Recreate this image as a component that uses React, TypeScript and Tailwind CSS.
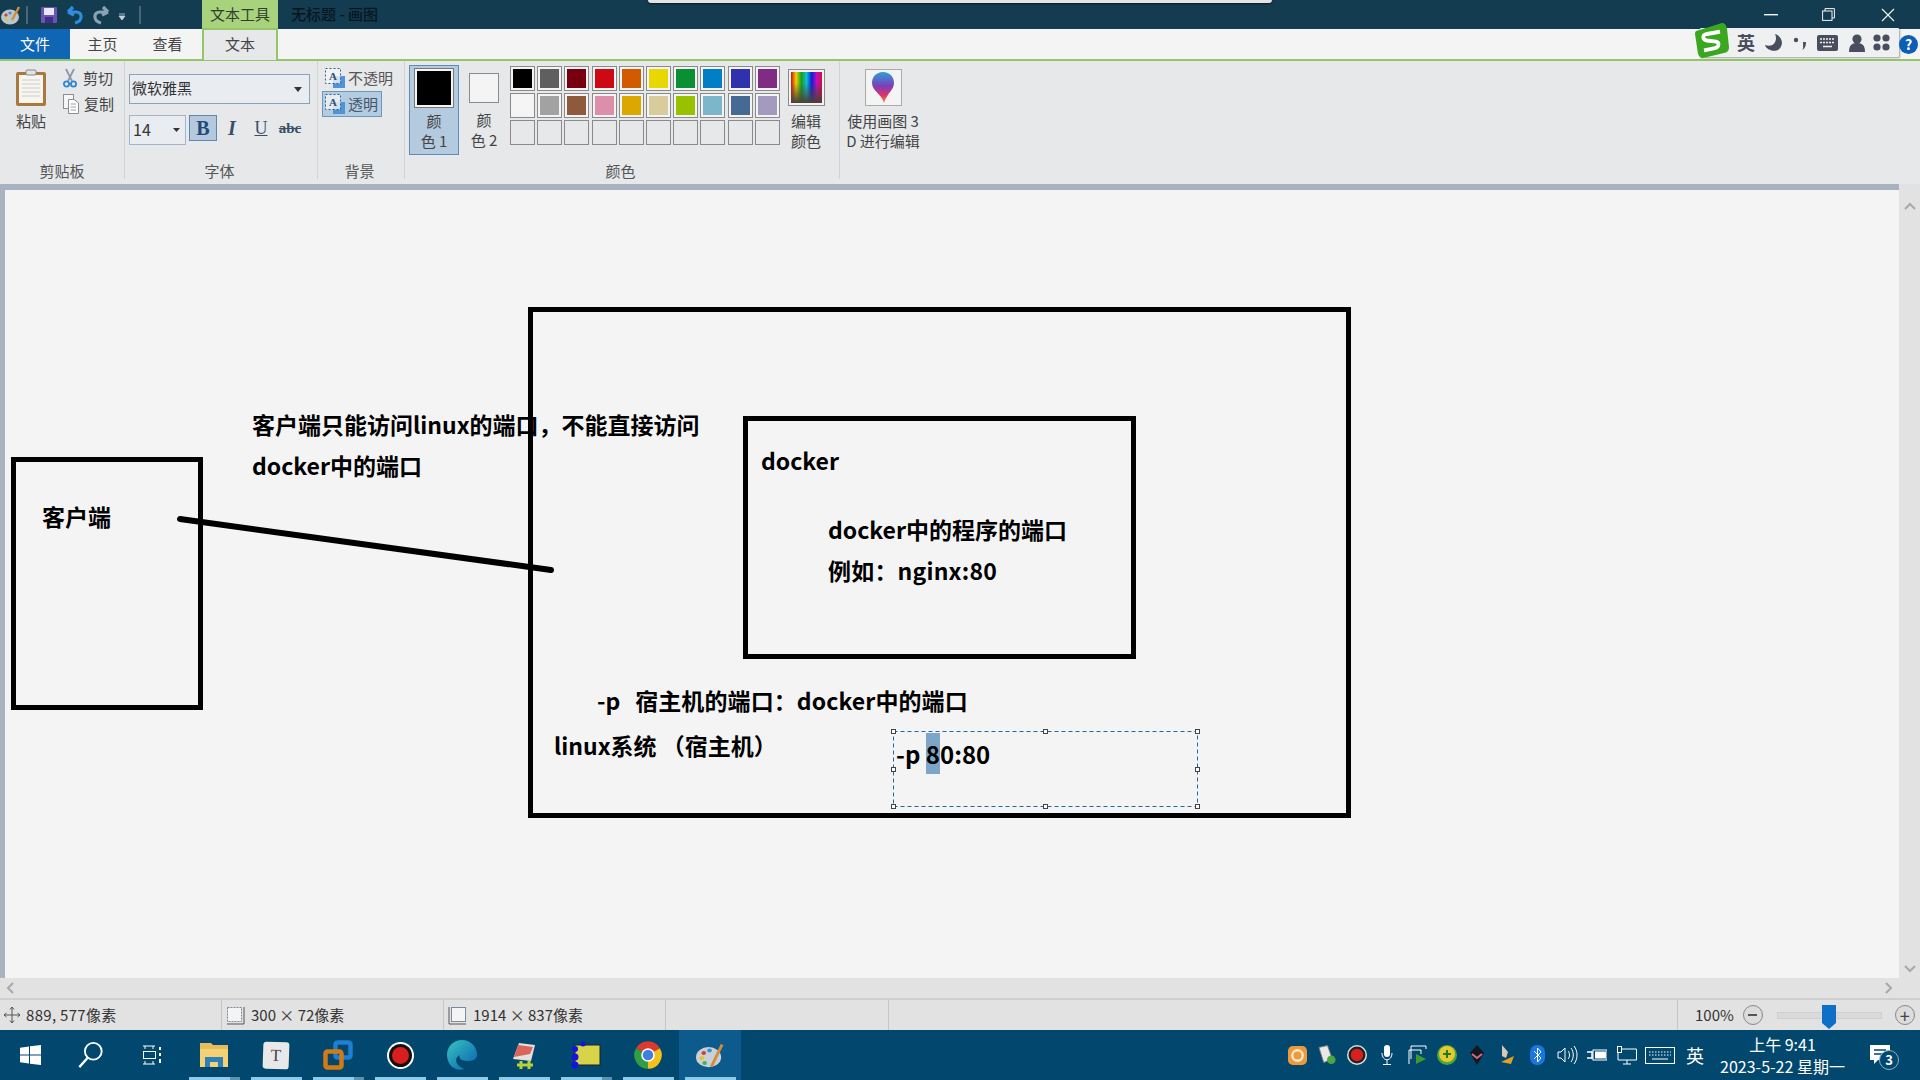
import type { ReactNode } from "react";

const paletteTop = [
  "bg-[#000000]", "bg-[#5f5f5f]", "bg-[#78000e]", "bg-[#cd0a14]", "bg-[#d25a00]",
  "bg-[#e6d800]", "bg-[#0a8f32]", "bg-[#007fc6]", "bg-[#2f32ac]", "bg-[#812c84]",
];
const paletteMid = [
  "bg-[#f5f5f5]", "bg-[#a2a2a2]", "bg-[#8f5a3c]", "bg-[#dd8eaa]", "bg-[#dca800]",
  "bg-[#d8cc9c]", "bg-[#98c200]", "bg-[#7cb6ca]", "bg-[#466a94]", "bg-[#a49ac0]",
];

function Swatch({ color }: { color: string }) {
  return (
    <div className="h-[25px] w-[25px] border border-[#8a8a8a] bg-[#f4f4f4] p-[2px]">
      <div className={`h-full w-full ${color}`} />
    </div>
  );
}

function GroupLabel({ children, shift = false }: { children: ReactNode; shift?: boolean }) {
  return <div className={`absolute -bottom-[4px] left-0 h-[24px] text-center text-[15px] leading-[24px] text-[#555] ${shift ? "right-[3px]" : "right-0"}`}>{children}</div>;
}

function TransparentIcon() {
  return (
    <svg width="20" height="20" viewBox="0 0 20 20" className="shrink-0">
      <rect x="8" y="8" width="12" height="12" fill="#4f94d8" />
      <rect x="0.5" y="0.5" width="15" height="15" fill="#f4f4f4" fillOpacity="0.8" stroke="#2f5f8f" strokeDasharray="2 2" />
      <text x="8" y="12" textAnchor="middle" fontSize="11" fontWeight="700" fontFamily="Liberation Serif" fill="#2d4f75">A</text>
    </svg>
  );
}

function TaskButton({ children, underline = true, split = false, active = false }: { children: ReactNode; underline?: boolean; split?: boolean; active?: boolean }) {
  return (
    <div className={`relative flex h-[50px] w-[62px] items-center justify-center ${active ? "bg-[#0c5b8c]" : ""}`}>
      {children}
      {underline && (
        <div className="absolute bottom-0 left-[6px] right-[5px] flex h-[3px]">
          <div className="flex-1 bg-[#8ecbe6]" />
          {split && <div className="w-[10px] bg-[#5f93ad]" />}
        </div>
      )}
    </div>
  );
}

function TrayItem({ children, wide = false }: { children: ReactNode; wide?: boolean }) {
  return <div className={`flex h-[50px] items-center justify-center ${wide ? "w-[34px]" : "w-[30px]"}`}>{children}</div>;
}

export default function App() {
  return (
    <div className="relative flex h-[1080px] w-[1920px] flex-col overflow-hidden bg-[#e2e2e2] font-['Noto_Sans_CJK_SC','Liberation_Sans',sans-serif]">
      {/* title bar */}
      <div className="flex h-[29px] shrink-0 items-center bg-[#143c51]">
        <svg width="20" height="24" viewBox="0 0 20 24" className="ml-[1px]">
          <ellipse cx="9" cy="14" rx="9" ry="7.5" fill="#b9c6cc" />
          <circle cx="5" cy="12" r="1.6" fill="#d63b2f" />
          <circle cx="9" cy="10" r="1.6" fill="#3a8fd8" />
          <circle cx="5" cy="16" r="1.6" fill="#e2c23a" />
          <path d="M11 17 L18 4" stroke="#d88a3a" strokeWidth="2.4" />
        </svg>
        <div className="ml-[5px] h-[18px] w-[2px] bg-[#4c6573]" />
        <svg width="16" height="16" viewBox="0 0 16 16" className="ml-[13px]">
          <rect width="16" height="16" rx="1" fill="#6a55b5" />
          <rect x="3" y="1" width="10" height="7" fill="#e9e6f5" />
          <rect x="4" y="10" width="8" height="6" fill="#3f2f86" />
        </svg>
        <svg width="18" height="20" viewBox="0 0 18 20" className="ml-[9px]">
          <path d="M2 7 L7 2 M2 7 L8 10 M2 7 H10 C17 7 17 16 9 18" fill="none" stroke="#2d8fdc" strokeWidth="3.2" />
        </svg>
        <svg width="18" height="20" viewBox="0 0 18 20" className="ml-[8px]">
          <path d="M16 7 L11 2 M16 7 L10 10 M16 7 H8 C1 7 1 16 9 18" fill="none" stroke="#88a3b3" strokeWidth="3.2" />
        </svg>
        <svg width="8" height="8" viewBox="0 0 8 8" className="ml-[8px] mt-[4px]">
          <path d="M1 1 H7 M1 3 H7 L4 7 Z" fill="#c8d2d8" stroke="#c8d2d8" strokeWidth="0.8" />
        </svg>
        <div className="ml-[13px] h-[18px] w-[2px] bg-[#4c6573]" />
        <div className="ml-[61px] flex h-[29px] w-[76px] items-center justify-center bg-[#a8d27c] text-[15px] text-[#2f3f2f]">文本工具</div>
        <div className="ml-[13px] text-[15px] font-medium text-[#061620]">无标题 - 画图</div>
        <div className="ml-auto flex items-center">
          <svg width="14" height="2" viewBox="0 0 14 2" className="mr-[44px]"><rect width="14" height="1.4" fill="#f2f5f6" /></svg>
          <svg width="13" height="13" viewBox="0 0 13 13" className="mr-[46px]">
            <path d="M3 3 V0.6 H12.4 V10 H10" fill="none" stroke="#f2f5f6" />
            <rect x="0.6" y="3" width="9.4" height="9.4" fill="none" stroke="#f2f5f6" />
          </svg>
          <svg width="14" height="14" viewBox="0 0 14 14" className="mr-[25px]">
            <path d="M1 1 L13 13 M13 1 L1 13" stroke="#f2f5f6" strokeWidth="1.1" />
          </svg>
        </div>
      </div>

      {/* tab row */}
      <div className="relative flex h-[32px] shrink-0 items-center border-b-2 border-[#93c668] bg-[#f4f4f4] text-[15px] text-[#444]">
        <div className="flex h-full w-[70px] items-center justify-center bg-[#0e66b5] text-white">文件</div>
        <div className="flex h-full w-[65px] items-center justify-center">主页</div>
        <div className="flex h-full w-[65px] items-center justify-center">查看</div>
        <div className="ml-[2px] flex h-[32px] w-[76px] items-center justify-center border-x-2 border-t-2 border-[#93c668] border-b-[#e6e8ea] bg-[#e6e8ea] pb-[2px]">文本</div>
      </div>

      {/* ribbon */}
      <div className="flex h-[123px] shrink-0 bg-[#e6e8ea] text-[15px] text-[#444]">
        <div className="relative flex h-[118px] w-[125px] border-r border-[#cfd2d6] pt-[5px]">
          <div className="ml-[15px] mt-[3px] flex w-[32px] flex-col items-center">
            <svg width="32" height="38" viewBox="0 0 32 38">
              <rect x="1" y="3" width="30" height="34" rx="2" fill="#a9773f" />
              <rect x="4" y="6" width="24" height="28" fill="#f7f5ee" />
              <path d="M7 11 H25 M7 15 H25 M7 19 H25 M7 23 H25 M7 27 H25" stroke="#c8ccd2" />
              <rect x="11" y="1" width="10" height="5" rx="1" fill="#dfe3e6" stroke="#888" />
            </svg>
            <div className="mt-[3px] leading-[22px]">粘贴</div>
          </div>
          <div className="ml-[16px] flex flex-col gap-[4px] pt-[1px]">
            <div className="flex h-[22px] items-center gap-[6px]">
              <svg width="14" height="20" viewBox="0 0 14 20">
                <path d="M3 1 L9 13 M11 1 L5 13" stroke="#8d99a5" strokeWidth="1.8" />
                <circle cx="3.5" cy="16" r="2.6" fill="none" stroke="#2f86d0" strokeWidth="1.8" />
                <circle cx="10.5" cy="16" r="2.6" fill="none" stroke="#2f86d0" strokeWidth="1.8" />
              </svg>
              <span>剪切</span>
            </div>
            <div className="flex h-[22px] items-center gap-[5px]">
              <svg width="16" height="20" viewBox="0 0 16 20">
                <rect x="0.5" y="0.5" width="10" height="14" fill="#f6f6f6" stroke="#8b8f94" />
                <path d="M5.5 5.5 H11 L15.5 9 V19.5 H5.5 Z" fill="#fff" stroke="#8b8f94" />
                <path d="M7.5 10 H13 M7.5 13 H13 M7.5 16 H13" stroke="#9aa6b2" />
              </svg>
              <span>复制</span>
            </div>
          </div>
          <GroupLabel>剪贴板</GroupLabel>
        </div>

        <div className="relative h-[118px] w-[193px] border-r border-[#cfd2d6] pl-[4px] pt-[13px]">
          <div className="flex h-[30px] w-[181px] items-center justify-between border border-[#8fa0ba] bg-[#e9ecf1] pl-[2px] pr-[7px] text-[#333]">
            <span className="-translate-y-[1px]">微软雅黑</span>
            <svg width="8" height="5" viewBox="0 0 8 5"><path d="M0 0 H8 L4 5 Z" fill="#333" /></svg>
          </div>
          <div className="mt-[11px] flex items-start">
            <div className="flex h-[30px] w-[57px] items-center justify-between border border-[#a7b4c8] bg-[#e9ecf1] pl-[3px] pr-[5px] text-[16px] text-[#333]">
              <span className="-translate-y-[1px]">14</span>
              <svg width="7" height="4" viewBox="0 0 7 4"><path d="M0 0 H7 L3.5 4 Z" fill="#333" /></svg>
            </div>
            <div className="ml-[3px] flex h-[26px] w-[28px] items-center justify-center border border-[#5c87ae] bg-[#b4c9de] font-['Liberation_Serif',serif] text-[20px] font-bold text-[#234a78]">B</div>
            <div className="flex h-[26px] w-[30px] items-center justify-center font-['Liberation_Serif',serif] text-[20px] italic font-bold text-[#3a4d68]">I</div>
            <div className="flex h-[26px] w-[28px] items-center justify-center font-['Liberation_Serif',serif] text-[18px] text-[#3a4d68] underline">U</div>
            <div className="flex h-[26px] w-[30px] items-center justify-center font-['Liberation_Serif',serif] text-[15px] font-bold text-[#3a4d68] line-through">abc</div>
          </div>
          <GroupLabel shift>字体</GroupLabel>
        </div>

        <div className="relative h-[118px] w-[87px] border-r border-[#cfd2d6] pl-[4px] pt-[6px]">
          <div className="flex h-[22px] items-center gap-[3px] pl-[3px] text-[#555]">
            <TransparentIcon />
            <span>不透明</span>
          </div>
          <div className="mt-[2px] flex h-[26px] w-[60px] items-center gap-[3px] border border-[#6b96bf] bg-[#b4cce0] pl-[2px] text-[#44566a]">
            <TransparentIcon />
            <span>透明</span>
          </div>
          <GroupLabel shift>背景</GroupLabel>
        </div>

        <div className="relative flex h-[118px] w-[435px] border-r border-[#cfd2d6] pt-[4px]">
          <div className="ml-[4px] flex h-[90px] w-[50px] flex-col items-center border border-[#5e8cb8] bg-[#b3cadf] pt-[2px] leading-[20px]">
            <div className="h-[40px] w-[40px] border border-[#777] bg-[#f4f4f4] p-[2px]"><div className="h-full w-full bg-black" /></div>
            <div className="mt-[3px]">颜</div>
            <div>色 1</div>
          </div>
          <div className="ml-[6px] flex w-[38px] flex-col items-center pt-[8px] leading-[20px]">
            <div className="h-[30px] w-[30px] border border-[#8a8a8a] bg-[#f4f4f4]" />
            <div className="mt-[7px]">颜</div>
            <div>色 2</div>
          </div>
          <div className="ml-[7px] mt-[1px] grid h-[79px] w-[270px] grid-cols-[repeat(10,25px)] grid-rows-[repeat(3,25px)] gap-x-[2.2px] gap-y-[2px]">
            {paletteTop.map((c) => <Swatch key={c} color={c} />)}
            {paletteMid.map((c) => <Swatch key={c} color={c} />)}
            {paletteTop.map((c) => <div key={c} className="h-[25px] w-[25px] border border-[#8a8a8a]" />)}
          </div>
          <div className="ml-[7px] flex w-[38px] flex-col items-center pt-[4px] leading-[20px]">
            <div className="h-[37px] w-[37px] border border-[#8a8a8a] bg-[#f4f4f4] p-[2px]">
              <div className="h-full w-full bg-[linear-gradient(to_bottom,transparent_35%,#4a4038),linear-gradient(to_right,#d01010,#f0d000,#10a020,#10c0d0,#1020d0,#c010c0,#d01030)]" />
            </div>
            <div className="mt-[5px]">编辑</div>
            <div>颜色</div>
          </div>
          <GroupLabel shift>颜色</GroupLabel>
        </div>

        <div className="flex w-[86px] flex-col items-center pt-[8px] leading-[20px]">
          <div className="flex h-[37px] w-[37px] items-center justify-center border border-[#aaa] bg-[#f4f4f4]">
            <svg width="22" height="31" viewBox="0 0 22 31">
              <defs>
                <linearGradient id="drop" x1="0" y1="0" x2="0" y2="1">
                  <stop offset="0" stopColor="#2f9fd8" />
                  <stop offset="0.45" stopColor="#7a3fb8" />
                  <stop offset="0.75" stopColor="#e0306a" />
                  <stop offset="1" stopColor="#f09020" />
                </linearGradient>
              </defs>
              <path d="M11 0 C18 0 22 5 22 11 C22 18 15 21 12 31 C9 21 0 19 0 11 C0 5 4 0 11 0 Z" fill="url(#drop)" />
            </svg>
          </div>
          <div className="mt-[5px] whitespace-nowrap">使用画图 3</div>
          <div className="whitespace-nowrap">D 进行编辑</div>
        </div>
      </div>

      {/* canvas and scroll bars */}
      <div className="flex min-h-0 flex-1">
        <div className="flex min-w-0 flex-1 flex-col">
          <div className="h-[6px] shrink-0 bg-[#a8b2c0]" />
          <div className="flex min-h-0 flex-1">
            <div className="w-[5px] shrink-0 bg-[#a8b2c0]" />
            <div className="relative flex-1 bg-[#f4f4f4] font-bold text-black">
              <div className="absolute left-[523px] top-[117px] h-[511px] w-[823px] border-[5px] border-black" />
              <div className="absolute left-[738px] top-[226px] h-[243px] w-[393px] border-[5px] border-black" />
              <div className="absolute left-[6px] top-[267px] h-[253px] w-[192px] border-[5px] border-black" />
              <svg className="absolute inset-0 h-full w-full">
                <line x1="175" y1="329" x2="546" y2="380" stroke="black" strokeWidth="6" strokeLinecap="round" />
              </svg>
              <div className="absolute left-[37px] top-[310px] text-[23px] leading-[32px]">客户端</div>
              <div className="absolute left-[247px] top-[218px] whitespace-nowrap text-[23px] leading-[32px]">客户端只能访问linux的端口，不能直接访问</div>
              <div className="absolute left-[247px] top-[259px] whitespace-nowrap text-[23px] leading-[32px]">docker中的端口</div>
              <div className="absolute left-[756px] top-[254px] text-[23px] leading-[32px]">docker</div>
              <div className="absolute left-[823px] top-[323px] whitespace-nowrap text-[23px] leading-[32px]">docker中的程序的端口</div>
              <div className="absolute left-[823px] top-[364px] whitespace-nowrap text-[23px] leading-[32px] tracking-[0.2px]">例如：nginx:80</div>
              <div className="absolute left-[592px] top-[494px] whitespace-pre text-[23px] leading-[32px] tracking-[0.1px]">-p  <span className="pl-[4px]">宿主机的端口：docker中的端口</span></div>
              <div className="absolute left-[549px] top-[539px] whitespace-pre text-[23px] leading-[32px]">linux系统 （宿主机）</div>
              <div className="absolute left-[887px] top-[540px] h-[78px] w-[307px]">
                <svg className="absolute inset-0 h-full w-full">
                  <rect x="1.5" y="1.5" width="304" height="75" fill="none" stroke="#1f6a9c" strokeDasharray="4 3" />
                </svg>
                <div className="absolute left-[4px] top-[3px] flex h-[41px] items-center whitespace-pre text-[24px] leading-[41px]">
                  <span>-p </span>
                  <span className="bg-[#7ca5c9]">8</span>
                  <span>0:80</span>
                </div>
                <div className="absolute -left-[1px] -top-[1px] h-[5px] w-[5px] border border-[#444] bg-white" />
                <div className="absolute left-[151px] -top-[1px] h-[5px] w-[5px] border border-[#444] bg-white" />
                <div className="absolute -right-[1px] -top-[1px] h-[5px] w-[5px] border border-[#444] bg-white" />
                <div className="absolute -left-[1px] top-[37px] h-[5px] w-[5px] border border-[#444] bg-white" />
                <div className="absolute -right-[1px] top-[37px] h-[5px] w-[5px] border border-[#444] bg-white" />
                <div className="absolute -bottom-[1px] -left-[1px] h-[5px] w-[5px] border border-[#444] bg-white" />
                <div className="absolute -bottom-[1px] left-[151px] h-[5px] w-[5px] border border-[#444] bg-white" />
                <div className="absolute -bottom-[1px] -right-[1px] h-[5px] w-[5px] border border-[#444] bg-white" />
              </div>
            </div>
          </div>
          <div className="flex h-[20px] shrink-0 items-center justify-between bg-[#e2e2e2] px-[6px]">
            <svg width="8" height="12" viewBox="0 0 8 12"><path d="M7 1 L2 6 L7 11" fill="none" stroke="#a8a8a8" strokeWidth="2" /></svg>
            <svg width="8" height="12" viewBox="0 0 8 12"><path d="M1 1 L6 6 L1 11" fill="none" stroke="#a8a8a8" strokeWidth="2" /></svg>
          </div>
        </div>
        <div className="flex w-[21px] shrink-0 flex-col items-center justify-between bg-[#e2e2e2] pb-[25px] pt-[18px]">
          <svg width="12" height="8" viewBox="0 0 12 8"><path d="M1 7 L6 2 L11 7" fill="none" stroke="#a8a8a8" strokeWidth="2" /></svg>
          <svg width="12" height="8" viewBox="0 0 12 8"><path d="M1 1 L6 6 L11 1" fill="none" stroke="#a8a8a8" strokeWidth="2" /></svg>
        </div>
      </div>

      {/* status bar */}
      <div className="flex h-[32px] shrink-0 items-center border-t-2 border-[#cfcfcf] bg-[#e2e2e2] text-[15px] text-[#333]">
        <div className="flex h-full w-[222px] items-center gap-[5px] border-r border-[#c6c6c6] pl-[3px]">
          <svg width="18" height="18" viewBox="0 0 18 18"><path d="M9 1 V17 M1 9 H17 M9 1 L7 3.5 M9 1 L11 3.5 M9 17 L7 14.5 M9 17 L11 14.5 M1 9 L3.5 7 M1 9 L3.5 11 M17 9 L14.5 7 M17 9 L14.5 11" stroke="#555" fill="none" /></svg>
          <span className="tracking-[0.3px]">889, 577像素</span>
        </div>
        <div className="flex h-full w-[222px] items-center gap-[6px] border-r border-[#c6c6c6] pl-[4px]">
          <svg width="19" height="19" viewBox="0 0 19 19"><rect x="1.5" y="1.5" width="14" height="14" fill="#f4f4f4" stroke="#7a8a9a" strokeDasharray="2 1" /><path d="M1 18 H18 M18 1 V18" stroke="#555" /></svg>
          <span>300 × 72像素</span>
        </div>
        <div className="flex h-full w-[222px] items-center gap-[6px] border-r border-[#c6c6c6] pl-[4px]">
          <svg width="19" height="19" viewBox="0 0 19 19"><rect x="3.5" y="1.5" width="14" height="14" fill="#f4f4f4" stroke="#7a8a9a" /><path d="M1 1 V18 H18" stroke="#555" fill="none" /></svg>
          <span>1914 × 837像素</span>
        </div>
        <div className="h-full w-[223px] border-r border-[#c6c6c6]" />
        <div className="h-full w-[789px] border-r border-[#c6c6c6]" />
        <span className="ml-[17px]">100%</span>
        <div className="ml-[9px] flex h-[20px] w-[20px] items-center justify-center rounded-full border border-[#888] bg-[#dcdcdc]">
          <div className="h-[2px] w-[9px] bg-[#555]" />
        </div>
        <div className="relative ml-[14px] h-[7px] w-[105px] border border-[#cfcfcf] bg-[#dadada]">
          <svg width="14" height="24" viewBox="0 0 14 24" className="absolute -top-[8px] left-[44px]"><path d="M0 0 H14 V18 L7 24 L0 18 Z" fill="#0e6fc9" /></svg>
        </div>
        <div className="ml-[13px] flex h-[20px] w-[20px] items-center justify-center rounded-full border border-[#888] bg-[#dcdcdc] text-[18px] leading-none text-[#444]">+</div>
      </div>

      {/* taskbar */}
      <div className="flex h-[50px] shrink-0 items-center bg-[#02476e]">
        <div className="flex h-[50px] w-[60px] items-center justify-center">
          <svg width="21" height="20" viewBox="0 0 21 21" preserveAspectRatio="none"><path d="M0 3 L9 1.6 V10 H0 Z M10 1.4 L21 0 V10 H10 Z M0 11 H9 V19.4 L0 18 Z M10 11 H21 V21 L10 19.6 Z" fill="#fff" /></svg>
        </div>
        <div className="flex h-[50px] w-[60px] items-center justify-center">
          <svg width="29" height="28" viewBox="0 0 30 30"><circle cx="18" cy="11" r="9" fill="none" stroke="#fff" strokeWidth="2" /><path d="M12 18 L3 28" stroke="#fff" strokeWidth="2.5" /></svg>
        </div>
        <div className="flex h-[50px] w-[63px] items-center justify-center">
          <svg width="20" height="20" viewBox="0 0 20 20"><path d="M1 1 H13 M1 19 H13 M3 1 V4 M11 1 V4 M3 16 V19 M11 16 V19" stroke="#fff" /><rect x="1.5" y="6.5" width="12" height="7" fill="none" stroke="#fff" /><path d="M18 2 V5 M18 8 V11 M18 14 V18" stroke="#fff" strokeWidth="2" /></svg>
        </div>
        <TaskButton split>
          <svg width="28" height="24" viewBox="0 0 28 24"><path d="M0 0 H11 L13 2 H28 V24 H0 Z" fill="#e6bd5a" /><rect y="6" width="28" height="18" fill="#f3d276" /><rect x="5" y="14" width="18" height="10" fill="#2f7fb8" /><rect x="10" y="19" width="8" height="5" fill="#f3d276" /></svg>
        </TaskButton>
        <TaskButton>
          <div className="flex h-[27px] w-[26px] rotate-2 items-center justify-center rounded-[3px] bg-[#e8e8e8] font-['Liberation_Serif',serif] text-[17px] text-[#444]">T</div>
        </TaskButton>
        <TaskButton split>
          <svg width="30" height="30" viewBox="0 0 30 30"><rect x="12.5" y="2.5" width="15" height="15" rx="2" fill="none" stroke="#1f7fd0" strokeWidth="4.5" /><rect x="2.5" y="11.5" width="16" height="16" rx="2" fill="none" stroke="#d47a14" strokeWidth="4.5" /></svg>
        </TaskButton>
        <TaskButton>
          <svg width="27" height="27" viewBox="0 0 27 27"><circle cx="13.5" cy="13.5" r="13.5" fill="#fff" /><circle cx="13.5" cy="13.5" r="11.5" fill="#111" /><circle cx="13.5" cy="13.5" r="8.5" fill="#d81e1e" /></svg>
        </TaskButton>
        <TaskButton>
          <svg width="30" height="30" viewBox="0 0 30 30">
            <defs><linearGradient id="edge" x1="0" y1="0" x2="1" y2="1"><stop offset="0" stopColor="#36c5c0" /><stop offset="1" stopColor="#0b5fb0" /></linearGradient></defs>
            <path d="M15 0 C24 0 30 7 30 15 C30 20 25 21 20 21 C14 21 11 18 13 15 C6 18 9 27 18 29 C8 32 0 25 0 15 C0 7 6 0 15 0 Z" fill="url(#edge)" />
          </svg>
        </TaskButton>
        <TaskButton>
          <svg width="28" height="27" viewBox="0 0 28 27"><path d="M9 1 L25 3 L21 19 L3 17 Z" fill="#e5e0dc" /><path d="M8 3 L23 5 L20 12 L4 15 Z" fill="#d9655c" /><path d="M15 23 H23 M19 19 V27 M7 23 H15 M11 19 V27" stroke="#b5d433" strokeWidth="3" /></svg>
        </TaskButton>
        <TaskButton split>
          <svg width="30" height="28" viewBox="0 0 30 28"><rect x="4" y="4" width="25" height="20" fill="#d8d44a" stroke="#222" /><circle cx="4" cy="8" r="3" fill="#1414e0" /><circle cx="4" cy="16" r="3.5" fill="#1414e0" /><circle cx="4" cy="24" r="3.5" fill="#1414e0" /><circle cx="12" cy="3" r="2.5" fill="#1414e0" /></svg>
        </TaskButton>
        <TaskButton>
          <svg width="30" height="30" viewBox="0 0 24 24">
            <path d="M12 12 L2.47 6.5 A11 11 0 0 1 21.53 6.5 Z" fill="#db3a2c" />
            <path d="M12 12 L21.53 6.5 A11 11 0 0 1 12 23 Z" fill="#f3c11a" />
            <path d="M12 12 L12 23 A11 11 0 0 1 2.47 6.5 Z" fill="#2f9e44" />
            <circle cx="12" cy="12" r="5.4" fill="#fff" />
            <circle cx="12" cy="12" r="4.2" fill="#3f7fe0" />
          </svg>
        </TaskButton>
        <TaskButton active>
          <svg width="29" height="27" viewBox="0 0 30 32" preserveAspectRatio="none">
            <ellipse cx="13" cy="18" rx="13" ry="12" fill="#c8d2d6" />
            <circle cx="8" cy="13" r="2.4" fill="#d8412f" />
            <circle cx="14" cy="10" r="2.4" fill="#3a8fd8" />
            <circle cx="6" cy="19" r="2.4" fill="#e2c23a" />
            <circle cx="9" cy="25" r="2.4" fill="#4caf50" />
            <path d="M16 29 L27 3" stroke="#d88a3a" strokeWidth="3" />
          </svg>
        </TaskButton>

        <div className="ml-auto flex items-center text-white">
          <TrayItem>
            <svg width="19" height="19" viewBox="0 0 20 20"><rect width="20" height="20" rx="5" fill="#ec9a3c" /><circle cx="10" cy="10" r="5.5" fill="none" stroke="#f9e8c8" strokeWidth="2.5" /></svg>
          </TrayItem>
          <TrayItem>
            <svg width="19" height="20" viewBox="0 0 20 20"><path d="M1 2 L10 0 L15 14 L6 18 Z" fill="#e8e8e8" stroke="#777" /><circle cx="14" cy="15" r="4.5" fill="#48a840" /></svg>
          </TrayItem>
          <TrayItem>
            <svg width="20" height="20" viewBox="0 0 20 20"><circle cx="10" cy="10" r="10" fill="#ddd" /><circle cx="10" cy="10" r="8.5" fill="#222" /><circle cx="10" cy="10" r="6.2" fill="#d81e1e" /></svg>
          </TrayItem>
          <TrayItem>
            <svg width="12" height="20" viewBox="0 0 12 20"><rect x="3" y="0" width="6" height="12" rx="3" fill="#fff" /><path d="M1 8 C1 17 11 17 11 8 M6 15 V19.5 M2 19.5 H10" fill="none" stroke="#fff" /></svg>
          </TrayItem>
          <TrayItem>
            <svg width="19" height="20" viewBox="0 0 19 20"><path d="M3 14 V1 H18 V4" fill="none" stroke="#fff" /><path d="M1 19 V5 H13 V9" fill="none" stroke="#fff" /><path d="M8 9 L18 14 L8 19 Z" fill="#3e9a30" /></svg>
          </TrayItem>
          <TrayItem>
            <svg width="20" height="20" viewBox="0 0 20 20"><circle cx="10" cy="10" r="10" fill="#48a840" /><circle cx="10" cy="9" r="8" fill="#e8cb2a" /><path d="M10 5 V13 M6 9 H14" stroke="#1f7a20" strokeWidth="2" /></svg>
          </TrayItem>
          <TrayItem>
            <svg width="14" height="20" viewBox="0 0 14 20"><path d="M7 0 L14 8 L7 20 L0 8 Z" fill="#16161e" /><path d="M2 9 L7 13 L12 9" fill="none" stroke="#d06a8a" strokeWidth="2" /></svg>
          </TrayItem>
          <TrayItem>
            <svg width="18" height="20" viewBox="0 0 18 20"><path d="M4 0 L10 7 L8 13 L4 11 Z" fill="#d8c8b8" /><path d="M3 17 L16 11 L13 19 Z" fill="#e8a020" /></svg>
          </TrayItem>
          <TrayItem>
            <svg width="15" height="20" viewBox="0 0 15 20"><rect width="15" height="20" rx="7" fill="#1876e0" /><path d="M4 6 L11 13 L7.5 17 V3 L11 7 L4 14" fill="none" stroke="#fff" /></svg>
          </TrayItem>
          <TrayItem>
            <svg width="21" height="20" viewBox="0 0 21 20"><path d="M1 7 H4 L8 3 V17 L4 13 H1 Z M11 6 C13 8 13 12 11 14 M14 3 C17 7 17 13 14 17 M17 1 C21 6 21 14 17 19" fill="none" stroke="#fff" /></svg>
          </TrayItem>
          <TrayItem>
            <svg width="20" height="14" viewBox="0 0 20 14"><rect x="6" y="2" width="14" height="10" fill="none" stroke="#fff" /><rect x="8" y="3.5" width="11" height="7" fill="#fff" /><path d="M0 4 H5 M0 10 H5 M5 3 V11" stroke="#fff" strokeWidth="1.5" /></svg>
          </TrayItem>
          <TrayItem>
            <svg width="20" height="19" viewBox="0 0 20 19"><path d="M4 3 H19.5 V14 H1 V6" fill="none" stroke="#fff" /><rect x="0.5" y="0.5" width="4" height="6" fill="none" stroke="#fff" /><path d="M10 14 V18 M6 18 H14" stroke="#fff" /></svg>
          </TrayItem>
          <div className="flex h-[50px] w-[36px] items-center justify-center">
            <svg width="30" height="17" viewBox="0 0 30 17"><rect x="0.5" y="0.5" width="29" height="16" fill="none" stroke="#fff" /><path d="M4 5 H26 M4 8 H26" stroke="#fff" strokeDasharray="1.5 1.5" /><path d="M7 12 H23" stroke="#fff" /></svg>
          </div>
          <TrayItem wide>
            <span className="text-[18px]">英</span>
          </TrayItem>
          <div className="ml-[8px] flex w-[125px] flex-col items-center text-[16px] leading-[22px]">
            <span>上午 9:41</span>
            <span className="whitespace-nowrap">2023-5-22 星期一</span>
          </div>
          <div className="relative ml-[25px] mr-[28px] flex h-[50px] w-[22px] items-center">
            <svg width="20" height="20" viewBox="0 0 20 20"><path d="M0 0 H20 V15 H8 L4 19 V15 H0 Z" fill="#fff" /><path d="M4 5 H16 M4 9 H16" stroke="#02476e" strokeWidth="1.4" /></svg>
            <div className="absolute left-[9px] top-[20px] flex h-[20px] w-[20px] items-center justify-center rounded-full border border-[#7fb8d4] bg-[#02476e] text-[13px] font-bold">3</div>
          </div>
        </div>
      </div>

      {/* stuff floating over the window */}
      <div className="absolute left-[648px] top-0 h-[3px] w-[624px] rounded-b-[3px] bg-[#e4e4e4] shadow-[0_1px_2px_rgba(0,0,0,0.6)]" />
      <div className="absolute left-[1700px] top-[28px] flex h-[29px] w-[199px] items-center rounded-[1px] bg-[#eff0f2] pl-[37px] shadow-[1px_1px_2px_rgba(0,0,0,0.35)]">
        <span className="w-[28px] text-[18px] font-bold text-[#4a4d5c]">英</span>
        <svg width="18" height="18" viewBox="0 0 18 18" className="ml-[-1px]"><path d="M11 0 C14 6 10 14 1 11 C3 18 17 20 18 9 C18 5 15 1 11 0 Z" fill="#4a4d5c" /></svg>
        <svg width="14" height="16" viewBox="0 0 14 16" className="ml-[11px]"><circle cx="3" cy="5" r="2.2" fill="#4a4d5c" /><path d="M10 7 H13 C13 11 12 13 9.5 15 C10.5 12 10 10 10 7 Z" fill="#4a4d5c" /></svg>
        <svg width="21" height="16" viewBox="0 0 21 16" className="ml-[10px]"><rect width="21" height="16" rx="2" fill="#4a4d5c" /><path d="M3 4 H18 M3 7.5 H18" stroke="#eff0f2" strokeDasharray="2 1" strokeWidth="1.5" /><path d="M6 11.5 H15" stroke="#eff0f2" strokeWidth="1.5" /></svg>
        <svg width="16" height="18" viewBox="0 0 16 18" className="ml-[11px]"><circle cx="8" cy="5" r="4.6" fill="#4a4d5c" /><path d="M0 18 C0 11 3 9 8 9 C13 9 16 11 16 18 Z" fill="#4a4d5c" /></svg>
        <svg width="17" height="17" viewBox="0 0 17 17" className="ml-[8px]"><circle cx="4" cy="4" r="3.6" fill="#4a4d5c" /><circle cx="13" cy="4" r="3.6" fill="#4a4d5c" /><circle cx="4" cy="13" r="3.6" fill="#4a4d5c" /><circle cx="13" cy="13" r="3.6" fill="#4a4d5c" /></svg>
      </div>
      <svg width="36" height="35" viewBox="0 0 36 32" preserveAspectRatio="none" className="absolute left-[1694px] top-[23px]">
        <path d="M3 7 L28 0 C31 0 32 2 33 5 L35 22 C35 25 34 26 32 27 L9 32 C6 32 5 30 4 28 L1 10 C1 8 2 7 3 7 Z" fill="#3aa81e" />
        <path d="M26 8 L13 10 C8 11 8 15 13 16 L22 17 C26 18 25 22 21 23 L10 25" fill="none" stroke="#fff" strokeWidth="3.6" />
      </svg>
      <div className="absolute left-[1899px] top-[35px] flex h-[19px] w-[19px] items-center justify-center rounded-full bg-[#0c5fb3] text-[14px] font-bold text-white">?</div>
    </div>
  );
}
